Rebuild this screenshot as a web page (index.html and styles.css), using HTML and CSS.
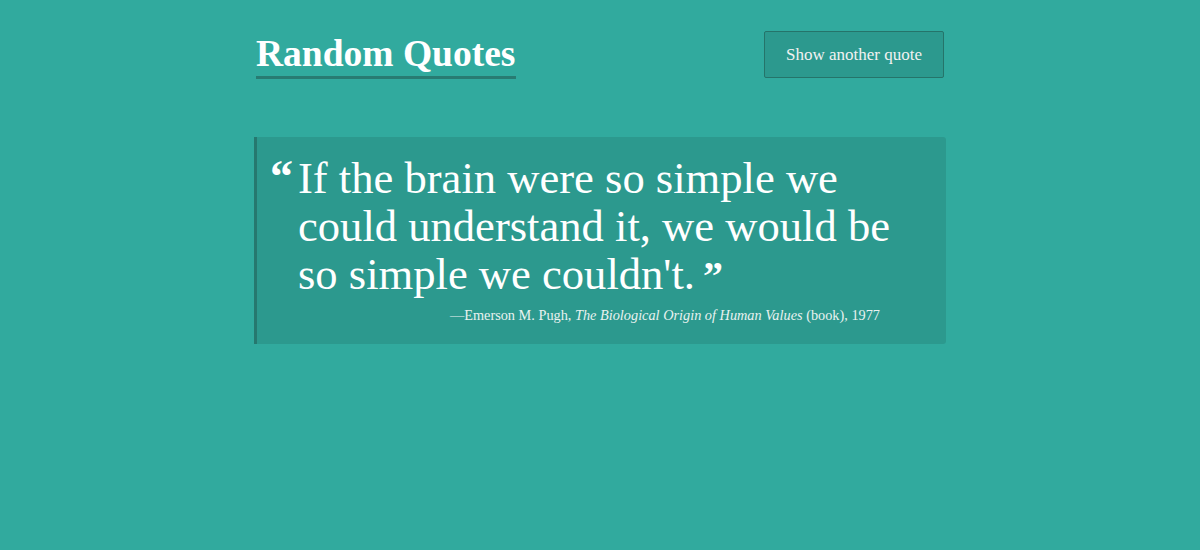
FILE: index.html
```html
<!DOCTYPE html>
<html lang="en">
<head>
<meta charset="utf-8">
<title>Random Quotes</title>
<link rel="stylesheet" href="styles.css">
</head>
<body>
<div class="container">
  <header class="header">
    <h1 class="title"><span class="title-text">Random Quotes</span></h1>
    <button class="btn" type="button">Show another quote</button>
  </header>
  <blockquote class="quote">
    <div class="quote-row">
      <span class="mark-open">“</span>
      <p class="quote-text">If the brain were so simple we could understand it, we would be so simple we couldn't.<b class="mark-close">”</b></p>
    </div>
    <footer class="cite">—Emerson M. Pugh, <cite>The Biological Origin of Human Values</cite> (book), 1977</footer>
  </blockquote>
</div>
</body>
</html>
```
FILE: styles.css
```css
html, body {
  margin: 0;
  padding: 0;
}
body {
  background: #31aa9e;
  color: #ffffff;
  font-family: "Liberation Serif", "DejaVu Serif", serif;
  min-height: 550px;
}
.container {
  width: 692px;
  margin: 0 auto;
}
.header {
  display: flex;
  justify-content: space-between;
  align-items: flex-start;
  padding: 31px 2px 0 2px;
}
.title {
  margin: 0;
  font-size: 37.5px;
  font-weight: bold;
  line-height: 45px;
}
.title-text {
  display: inline-block;
  border-bottom: 3px solid #287b72;
  padding: 0 1px 0 0;
}
.btn {
  width: 180px;
  height: 47px;
  background: #2c998e;
  color: #f2f2f2;
  border: 1px solid #25746a;
  border-radius: 2px;
  font-family: "Liberation Serif", "DejaVu Serif", serif;
  font-size: 17px;
  cursor: pointer;
}
.quote {
  margin: 58px 0 0 0;
  background: #2c998e;
  border-left: 3px solid #26786f;
  border-radius: 0 3px 3px 0;
  padding: 17px 30px 19px 13px;
}
.quote-row {
  display: flex;
  align-items: flex-start;
}
.mark-open {
  width: 28px;
  flex: none;
  font-size: 46px;
  font-weight: bold;
  line-height: 46px;
}
.quote-text {
  margin: 0;
  font-size: 44.6px;
  line-height: 48px;
  width: 620px;
}
.mark-close {
  display: inline-block;
  margin-left: 8px;
  font-size: 40px;
  line-height: 1;
}
.cite {
  margin-top: 7px;
  font-size: 14.3px;
  line-height: 20px;
  text-align: right;
  color: #e9f2f0;
  padding-right: 36px;
}
.cite cite {
  font-style: italic;
}
```
